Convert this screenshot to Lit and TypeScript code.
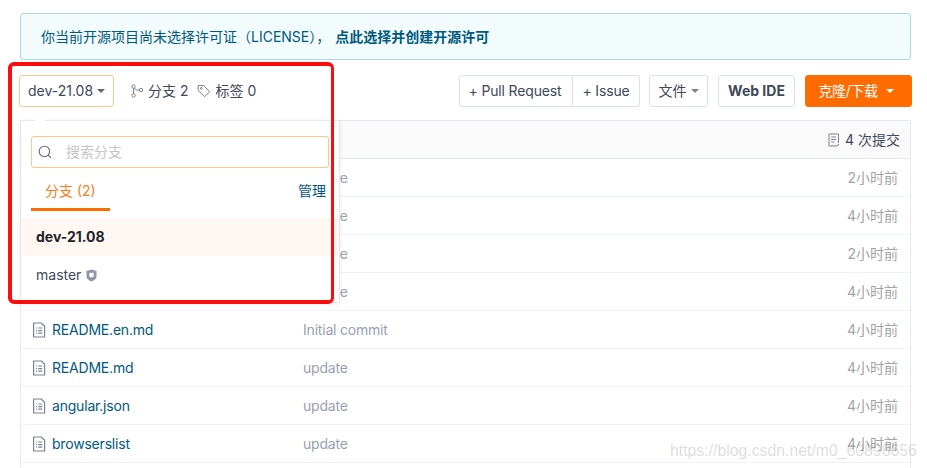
import { LitElement, html, css } from "lit";
import { customElement } from "lit/decorators.js";

const fileIcon = html`<svg class="ficon" width="14" height="16" viewBox="0 0 14 16" fill="none" stroke="#7b8296" stroke-width="1.2">
  <path d="M1.6 1h7.6L12.6 4.2V15H1.6z" stroke-linejoin="round"/>
  <path d="M4 6h.9M6.2 6h4M4 8.6h.9M6.2 8.6h4M4 11.2h.9M6.2 11.2h4"/>
</svg>`;

const rows = [
  [".browserslistrc", "update", "2小时前"],
  [".editorconfig", "update", "4小时前"],
  [".gitignore", "update", "2小时前"],
  ["LICENSE", "update", "4小时前"],
  ["README.en.md", "Initial commit", "4小时前"],
  ["README.md", "update", "4小时前"],
  ["angular.json", "update", "4小时前"],
  ["browserslist", "update", "4小时前"],
  ["karma.conf.js", "update", "4小时前"],
];

@customElement("app-root")
export class AppRoot extends LitElement {
  static styles = css`
    :host {
      display: block;
      width: 927px;
      height: 468px;
      overflow: hidden;
      position: relative;
      background: #fff;
      font-family: Inter, "Noto Sans CJK SC", sans-serif;
      font-size: 14px;
      line-height: 20px;
      color: #40485b;
    }
    .page {
      padding: 13px 15px 0 19px;
      display: flex;
      flex-direction: column;
    }
    .alert {
      margin: 0 1px 0 1px;
      height: 47px;
      box-sizing: border-box;
      border: 1px solid #aed8e2;
      border-radius: 3px;
      background: #f2fcfd;
      color: #005980;
      padding-left: 20px;
      display: flex;
      align-items: center;
      font-size: 14px;
    }
    .alert b { font-weight: 700; margin-left: 5px; }
    .bar {
      margin-top: 15px;
      height: 32px;
      display: flex;
      align-items: center;
    }
    .btn {
      box-sizing: border-box;
      height: 32px;
      display: flex;
      align-items: center;
      justify-content: center;
      border: 1px solid #dce3e8;
      border-radius: 3px;
      background: #fff;
      color: #40485b;
    }
    .branch {
      width: 95px;
      border-color: #fbc88e;
    }
    .caret {
      width: 0;
      height: 0;
      border-left: 4px solid transparent;
      border-right: 4px solid transparent;
      border-top: 4px solid #5f6779;
      margin-left: 4px;
    }
    .meta {
      display: flex;
      align-items: center;
      gap: 5px;
      color: #40485b;
    }
    .meta.m1 { margin-left: 17px; }
    .meta.m2 { margin-left: 9px; gap: 4px; }
    .spacer { flex: 1; }
    .group { display: flex; letter-spacing: -0.15px; }
    .group .btn:first-child { width: 114px; padding-right: 2px; border-radius: 3px 0 0 3px; }
    .group .btn:last-child { width: 67px; border-left: 0; border-radius: 0 3px 3px 0; }
    .file { width: 59px; margin-left: 9px; }
    .file .caret { border-top-color: #7b8296; }
    .ide { width: 77px; margin-left: 10px; font-weight: 700; }
    .clone {
      width: 107px;
      margin-left: 10px;
      padding-right: 5px;
      background: #fe6c00;
      border-color: #fe6c00;
      color: #fff;
      letter-spacing: -0.4px;
    }
    .clone .caret { border-top-color: #fff; margin-left: 8px; }
    .table {
      margin: 13px 1px 0 1px;
      border: 1px solid #e3e9ed;
      border-bottom: 0;
      border-radius: 3px 3px 0 0;
    }
    .thead {
      height: 37px;
      background: #fafafa;
      border-bottom: 1px solid #e3e9ed;
      display: flex;
      align-items: center;
      justify-content: flex-end;
      padding-right: 10px;
      gap: 5px;
    }
    .row {
      height: 37px;
      border-bottom: 1px solid #f0f3f5;
      display: flex;
      align-items: center;
    }
    .ficon { margin-left: 11px; flex: none; }
    .name {
      margin-left: 6px;
      width: 251px;
      color: #005980;
      letter-spacing: -0.2px;
    }
    .msg { flex: 1; color: #9a9fb0; letter-spacing: -0.2px; }
    .time { color: #a3a3a3; margin-right: 12px; }

    .menu {
      position: absolute;
      left: 20px;
      top: 120px;
      width: 320px;
      height: 183px;
      box-sizing: border-box;
      background: #fff;
      border: 1px solid #e3e6ea;
      border-top-color: #e3e9ed;
      box-shadow: 0 1px 4px rgba(0, 0, 0, 0.08);
      padding-top: 15px;
    }
    .notch {
      position: absolute;
      left: 14px;
      top: -2px;
      width: 10px;
      height: 3px;
      background: #fff;
    }
    .search {
      box-sizing: border-box;
      margin-left: 10px;
      width: 298px;
      height: 32px;
      border: 1px solid #fbc88e;
      border-radius: 3px;
      display: flex;
      align-items: center;
      padding-left: 6px;
      color: #c4c4c4;
      gap: 14px;
    }
    .tabs {
      margin: 0 0 0 10px;
      height: 43px;
      display: flex;
      justify-content: space-between;
      width: 295px;
    }
    .tab {
      width: 79px;
      height: 43px;
      box-sizing: border-box;
      border-bottom: 3px solid #fe6c00;
      color: #fe7c20;
      padding: 13px 0 0 14px;
    }
    .manage { color: #005980; padding-top: 13px; }
    .opt {
      margin-top: 7px;
      height: 38px;
      padding-left: 15px;
      display: flex;
      align-items: center;
      background: #fef7f2;
      font-weight: 700;
      color: #1f2329;
    }
    .opt.plain {
      margin-top: 0;
      background: #fff;
      font-weight: 400;
      color: #40485b;
      gap: 5px;
    }
    .red {
      position: absolute;
      left: 8px;
      top: 62px;
      width: 326px;
      height: 242px;
      box-sizing: border-box;
      border-style: solid;
      border-color: #fc0d0d;
      border-width: 4px 3px 4px 4px;
      border-radius: 6px;
      pointer-events: none;
    }
    .mark {
      position: absolute;
      left: 670px;
      top: 441px;
      font-family: "Liberation Sans", sans-serif;
      font-size: 15.8px;
      color: rgba(130, 130, 130, 0.28);
      white-space: nowrap;
    }
  `;

  render() {
    return html`
      <div class="page">
        <div class="alert"><span>你当前开源项目尚未选择许可证（LICENSE），<b>点此选择并创建开源许可</b></span></div>
        <div class="bar">
          <div class="btn branch">dev-21.08<span class="caret"></span></div>
          <div class="meta m1">
            <svg width="12" height="14" viewBox="0 0 12 14" fill="none" stroke="#7b8296" stroke-width="1">
              <circle cx="2.500" cy="2.500" r="1.700"/><circle cx="2.500" cy="11.500" r="1.700"/><circle cx="10" cy="6" r="1.700"/>
              <path d="M2.500 4.200v5.600M3.300 4c.8 2 3 2.200 5 2"/>
            </svg>
            <span>分支 2</span>
          </div>
          <div class="meta m2">
            <svg width="14" height="14" viewBox="0 0 14 14" fill="none" stroke="#7b8296" stroke-width="1">
              <path d="M1.200 1.500h5.300l6.200 6.200-5 5L1.200 6.600z" stroke-linejoin="round"/><circle cx="4.200" cy="4.400" r=".9"/>
            </svg>
            <span>标签 0</span>
          </div>
          <div class="spacer"></div>
          <div class="group"><div class="btn">+ Pull Request</div><div class="btn">+ Issue</div></div>
          <div class="btn file">文件<span class="caret"></span></div>
          <div class="btn ide">Web IDE</div>
          <div class="btn clone">克隆/下载<span class="caret"></span></div>
        </div>
        <div class="table">
          <div class="thead">
            <svg width="12" height="14" viewBox="0 0 12 14" fill="none" stroke="#7b8296" stroke-width="1">
              <path d="M9 13H1V1h9.500v9M3.200 4h5M3.200 6.500h5M3.200 9h3M9 13l2-2"/>
            </svg>
            <span>4 次提交</span>
          </div>
          ${rows.map(
            (r) => html`<div class="row">
              ${fileIcon}
              <span class="name">${r[0]}</span>
              <span class="msg">${r[1]}</span>
              <span class="time">${r[2]}</span>
            </div>`
          )}
        </div>
      </div>

      <div class="menu">
        <div class="notch"></div>
        <div class="search">
          <svg width="14" height="14" viewBox="0 0 16 16" fill="none" stroke="#5f6779" stroke-width="1.200">
            <circle cx="7.300" cy="7.300" r="5.900"/><path d="M11.600 11.600l3.200 3.200"/>
          </svg>
          <span>搜索分支</span>
        </div>
        <div class="tabs">
          <div class="tab">分支 (2)</div>
          <div class="manage">管理</div>
        </div>
        <div class="opt">dev-21.08</div>
        <div class="opt plain">master
          <svg width="11" height="13" viewBox="0 0 12 14">
            <path d="M6 .5l5.500 1.500v6.200c0 2.600-3.400 4.600-5.500 5.300C3.900 12.800.5 10.800.5 8.200V2z" fill="#8f96a8"/>
            <rect x="3.600" y="4" width="4.800" height="4.800" rx="1.200" fill="#fff"/>
          </svg>
        </div>
      </div>
      <div class="red"></div>
      <div class="mark">https://blog.csdn.net/m0_60898656</div>
    `;
  }
}
